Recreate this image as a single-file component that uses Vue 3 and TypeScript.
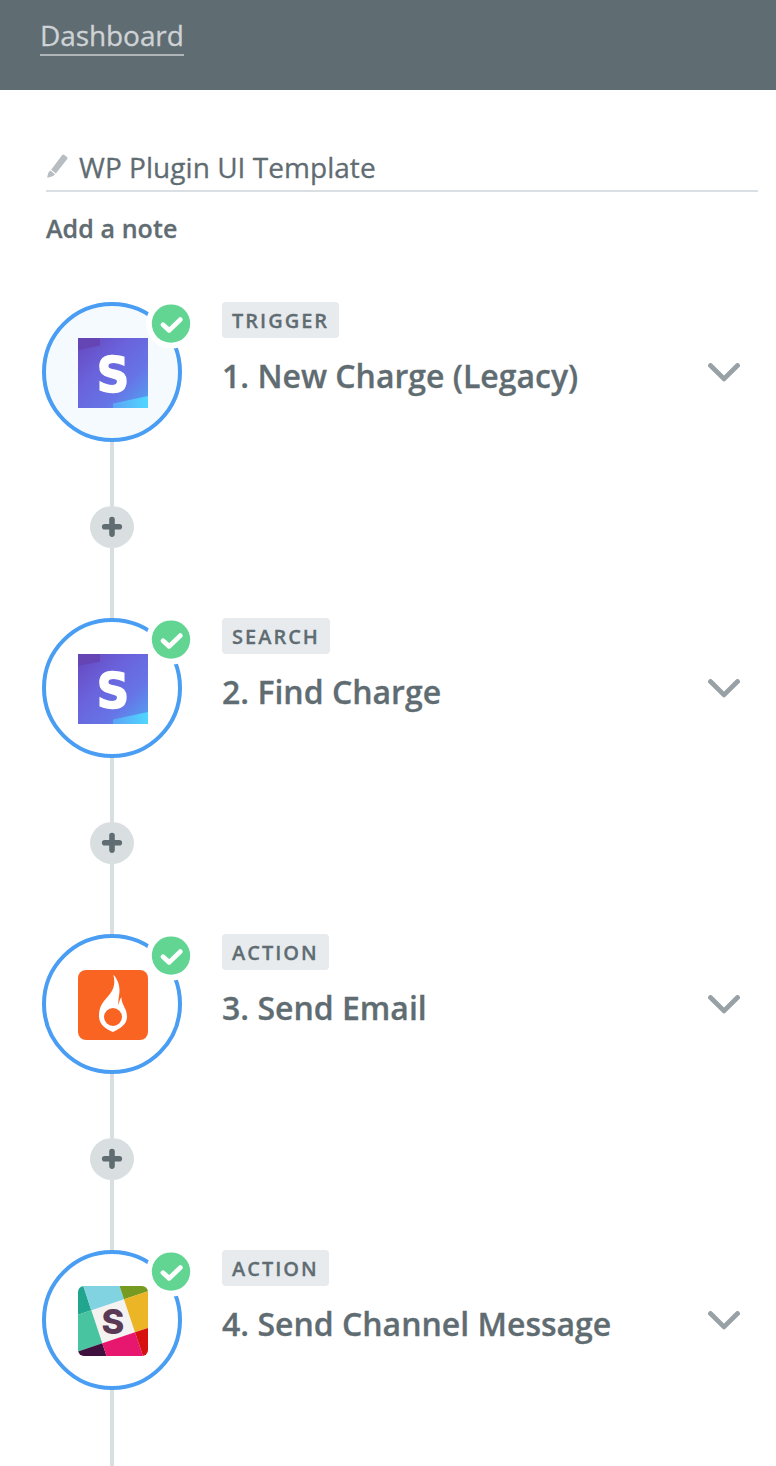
<script setup lang="ts">
interface Step {
  kind: string
  title: string
  app: 'stripe' | 'flame' | 'slack'
  active: boolean
}

const steps: Step[] = [
  { kind: 'TRIGGER', title: '1. New Charge (Legacy)', app: 'stripe', active: true },
  { kind: 'SEARCH', title: '2. Find Charge', app: 'stripe', active: false },
  { kind: 'ACTION', title: '3. Send Email', app: 'flame', active: false },
  { kind: 'ACTION', title: '4. Send Channel Message', app: 'slack', active: false },
]
</script>

<template>
  <div class="page">
    <header class="topbar">
      <a class="crumb">Dashboard</a>
    </header>
    <section class="intro">
      <div class="name-row">
        <svg class="pencil" width="24" height="26" viewBox="0 0 24 26">
          <path d="M16.200 1Q17.200 0 18.400.9L21 3Q22 4 21.200 5.100L9.900 19.600 5.100 15.700Z" />
          <path d="M4.400 16.600 8.900 20.300 7.200 22 2.400 23.600Q1 24 1.300 22.600L2.500 18.600Z" />
        </svg>
        <span class="name">WP Plugin UI Template</span>
      </div>
      <div class="note">Add a note</div>
    </section>
    <ol class="steps">
      <li v-for="(step, i) in steps" :key="step.title" class="step">
        <div class="rail">
          <div class="node" :class="{ active: step.active }">
            <svg v-if="step.app === 'stripe'" class="logo" width="70" height="70" viewBox="0 0 70 70">
              <defs>
                <linearGradient :id="'sky' + i" x1="0" y1="0" x2="1" y2="1">
                  <stop offset="0" stop-color="#6647bd" />
                  <stop offset=".38" stop-color="#6a63dc" />
                  <stop offset=".68" stop-color="#6674e6" />
                  <stop offset="1" stop-color="#50a6f2" />
                </linearGradient>
                <linearGradient :id="'ice' + i" x1="0" y1="0" x2="1" y2="0">
                  <stop offset="0" stop-color="#5ca4f5" />
                  <stop offset="1" stop-color="#4fd7ff" />
                </linearGradient>
              </defs>
              <rect width="70" height="70" :fill="'url(#sky' + i + ')'" />
              <path d="M0 0H22V7.5L0 12Z" fill="#6544b4" />
              <path d="M35 65.5 70 58V70H35Z" :fill="'url(#ice' + i + ')'" />
              <text class="stripe-s" x="35" y="53.600" text-anchor="middle">S</text>
            </svg>
            <svg v-else-if="step.app === 'flame'" class="logo" width="70" height="70" viewBox="0 0 70 70">
              <rect width="70" height="70" rx="8" fill="#fa6423" />
              <path
                fill="#fff"
                fill-rule="evenodd"
                d="M35.400 4.800C39.500 9 41.600 15 41.500 21C41.400 26 39.600 31 40.700 35C41.400 31 41.800 29.500 43.400 27.300C43.400 35 49.200 38.500 49 47C48.600 54.500 43 58 35 62C27 58.500 21.300 54.500 21 46.500C20.900 36.500 24.800 32.500 29 27.500C34.500 21 38 16 35.400 4.800ZM35 38A9 9 0 1 0 35 56A9 9 0 1 0 35 38Z"
              />
            </svg>
            <svg v-else class="logo rounded" width="70" height="70" viewBox="0 0 70 70">
              <rect width="70" height="70" fill="#f5f3f2" />
              <path d="M0 0H5.300L13.300 24.300 0 28.700Z" fill="#20a58f" />
              <path d="M5.300 0H41.600L46 13.300 13.300 24.300Z" fill="#81d3e1" />
              <path d="M41.600 0H70V5.200L46 13.300Z" fill="#779a20" />
              <path d="M0 28.700 13.300 24.300 24.300 57.300 0 65.500Z" fill="#49c4a0" />
              <path d="M46 13.300 70 5.200V42L57 46.300Z" fill="#ecb526" />
              <path d="M0 65.500 24.300 57.300 28.500 70H0Z" fill="#3f0f3e" />
              <path d="M24.300 57.300 57 46.300 65 70H28.500Z" fill="#e7166f" />
              <path d="M57 46.300 70 42V70H65Z" fill="#d6110f" />
              <text class="slack-s" x="35" y="48.300" text-anchor="middle">S</text>
            </svg>
            <svg class="badge" width="52" height="52" viewBox="0 0 52 52">
              <circle cx="26" cy="25.600" r="25" fill="#fff" />
              <circle cx="26" cy="25.600" r="19.200" fill="#62d593" />
              <path d="M18 26.800 24.200 32.400 35.300 21.600" />
            </svg>
          </div>
          <div class="line"></div>
          <svg v-if="i < steps.length - 1" class="plus" width="44" height="42" viewBox="0 0 44 42">
            <ellipse cx="22" cy="21" rx="22" ry="21" />
            <path d="M14.700 20.800H29.300M22 13.500V28.100" />
          </svg>
          <div v-if="i < steps.length - 1" class="line"></div>
        </div>
        <div class="info">
          <span class="kind">{{ step.kind }}</span>
          <h2 class="title">{{ step.title }}</h2>
        </div>
        <svg class="chevron" width="32" height="20" viewBox="0 0 32 20">
          <path d="M2.500 2.500 16 15.900 29.500 2.500" />
        </svg>
      </li>
    </ol>
  </div>
</template>

<style>
body {
  margin: 0;
  background: #fff;
}
</style>

<style scoped>
.page {
  box-sizing: border-box;
  width: 776px;
  height: 1466px;
  overflow: hidden;
  background: #fff;
  color: #5f6c72;
  font-family: "Open Sans", "Noto Sans", sans-serif;
  -webkit-text-stroke: 0.300px;
}
.topbar {
  box-sizing: border-box;
  height: 90px;
  padding: 17px 40px 0;
  background: #5f6c72;
}
.crumb {
  display: inline-block;
  height: 37px;
  border-bottom: 2px solid #afb6b9;
  color: #cfd3d6;
  font-size: 28px;
  letter-spacing: -0.080px;
  line-height: 37px;
}
.intro {
  height: 212px;
  padding: 0 18px 0 46px;
  box-sizing: border-box;
}
.name-row {
  display: flex;
  box-sizing: border-box;
  height: 102px;
  padding-top: 58px;
  border-bottom: 2px solid #d9dfe2;
}
.pencil {
  flex: none;
  margin-top: 6px;
  fill: #b7bdc1;
}
.name {
  margin-left: 9px;
  font-size: 28px;
  letter-spacing: 0.040px;
  line-height: 38px;
  white-space: nowrap;
}
.note {
  margin-top: 18px;
  font-size: 25px;
  font-weight: 600;
  letter-spacing: 0.080px;
  line-height: 36px;
}
.steps {
  margin: 0;
  padding: 0 36px 0 42px;
  list-style: none;
}
.step {
  display: flex;
  height: 316px;
}
.rail {
  display: flex;
  flex: none;
  flex-direction: column;
  align-items: center;
  width: 140px;
}
.node {
  position: relative;
  box-sizing: border-box;
  flex: none;
  width: 140px;
  height: 140px;
  padding: 32px;
  border: 4px solid #499df3;
  border-radius: 50%;
  background: #fff;
}
.node.active {
  background: #f5faff;
}
.logo {
  display: block;
}
.rounded {
  border-radius: 6px;
}
.stripe-s {
  fill: #fff;
  stroke: #fff;
  stroke-width: 1.500px;
  font-family: "DejaVu Sans Condensed", "DejaVu Sans", sans-serif;
  font-size: 50px;
  font-stretch: semi-condensed;
  font-weight: 700;
  -webkit-text-stroke: 1.500px #fff;
}
.slack-s {
  fill: #5b3a56;
  font-family: Inter, "Open Sans", sans-serif;
  font-size: 34.500px;
  font-weight: 800;
}
.badge {
  position: absolute;
  top: -8px;
  right: -19px;
  fill: none;
  stroke-linecap: round;
  stroke-linejoin: round;
}
.badge path {
  stroke: #fff;
  stroke-width: 4.800;
}
.line {
  flex: 1 1 64px;
  width: 4px;
  background: #d9dfe1;
}
.line:last-child {
  flex-basis: 70px;
}
.plus {
  flex: none;
  fill: #d9dfe1;
}
.plus path {
  fill: none;
  stroke: #5f6c72;
  stroke-linecap: round;
  stroke-width: 5.600;
}
.info {
  display: flex;
  flex: 1;
  flex-direction: column;
  align-items: flex-start;
  margin-left: 40px;
}
.kind {
  height: 36px;
  padding: 0 10px;
  border-radius: 4px;
  background: #e7ebee;
  font-size: 20px;
  font-weight: 600;
  letter-spacing: 2px;
  line-height: 37px;
}
.title {
  margin: 16px 0 0;
  font-size: 32px;
  font-weight: 600;
  line-height: 44px;
  white-space: nowrap;
}
.chevron {
  flex: none;
  margin: 61px 0 0;
  fill: none;
  stroke: #98a1a5;
  stroke-linecap: round;
  stroke-linejoin: round;
  stroke-width: 4.800;
}
</style>
